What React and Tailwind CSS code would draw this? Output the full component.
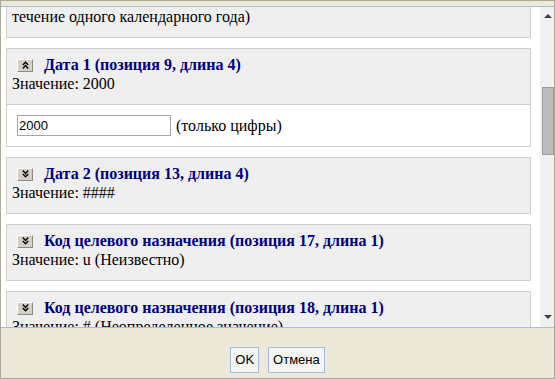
import React from "react";

function ToggleButton({ open }) {
  return (
    <span className="flex h-[13px] w-[16px] shrink-0 items-center justify-center border border-t-white border-l-white border-b-[#8c8a84] border-r-[#8c8a84] bg-[#d4d0c8]">
      <svg width="7" height="8" viewBox="0 0 7 8" className={open ? "" : "rotate-180"}>
        <polyline points="0.8,4 3.5,1.2 6.2,4" fill="none" stroke="#000" strokeWidth="1.4" />
        <polyline points="0.8,7.4 3.5,4.6 6.2,7.4" fill="none" stroke="#000" strokeWidth="1.4" />
      </svg>
    </span>
  );
}

function Field({ title, value, open, children }) {
  return (
    <div className="mt-[10px] w-[525px] border border-[#d4d0c8]">
      <div className="bg-[#efefef] pt-[6px] pb-[11px] pl-[5px]">
        <div className="flex h-[20px] items-center">
          <span className="ml-[5px]">
            <ToggleButton open={open} />
          </span>
          <span className="ml-[11px] text-[16px] font-bold text-[#000080]">{title}</span>
        </div>
        <div className="h-[18px] text-[16px] leading-[18px] text-black">{value}</div>
      </div>
      {children}
    </div>
  );
}

export default function App() {
  return (
    <div className="flex h-[379px] w-[555px] flex-col overflow-hidden border border-[#aca899] bg-[#ece9d8] font-['Liberation_Serif',serif]">
      <div className="h-[5px] shrink-0" />
      <div className="flex h-[322px] shrink-0 border-y border-[#a3bde6] bg-white">
        <div className="flex-1 overflow-hidden pl-[5px]">
          <div className="w-[525px] border border-t-0 border-[#d4d0c8] bg-[#efefef] pb-[11px] pl-[5px] text-[16px] leading-[19px] text-black">
            течение одного календарного года)
          </div>
          <Field title="Дата 1 (позиция 9, длина 4)" value="Значение: 2000" open>
            <div className="flex h-[42px] items-center border-t border-[#d4d0c8] bg-white pl-[10px] pt-[0px]">
              <input
                defaultValue="2000"
                className="h-[21px] w-[154px] border border-[#a5a5a5] bg-white px-[1px] font-['Liberation_Sans',sans-serif] text-[13px] leading-[19px] text-black outline-none"
              />
              <span className="ml-[5px] text-[16px] leading-[19px] text-black">(только цифры)</span>
            </div>
          </Field>
          <Field title="Дата 2 (позиция 13, длина 4)" value="Значение: ####" />
          <Field title="Код целевого назначения (позиция 17, длина 1)" value="Значение: u (Неизвестно)" />
          <Field title="Код целевого назначения (позиция 18, длина 1)" value="Значение: # (Неопределенное значение)" />
        </div>
        <div className="flex w-[14px] shrink-0 flex-col items-center bg-[#f0f0f0] pl-[2px]">
          <div className="mt-[7px] h-0 w-0 border-x-[4px] border-b-[4px] border-x-transparent border-b-[#404040]" />
          <div className="mt-[69px] h-[68px] w-[12px] border border-[#9c9c9c] bg-[#bcbcbc]" />
          <div className="mt-[160px] h-0 w-0 border-x-[4px] border-t-[4px] border-x-transparent border-t-[#404040]" />
        </div>
      </div>
      <div className="flex flex-1 items-start justify-center gap-[9px] pt-[19px] font-['Liberation_Sans',sans-serif] text-[13px] text-black">
        <button className="h-[26px] border border-[#a4bde4] bg-[#f4f4f0] px-[4px]">OK</button>
        <button className="h-[26px] border border-[#a4bde4] bg-[#f4f4f0] px-[4px]">Отмена</button>
      </div>
    </div>
  );
}
